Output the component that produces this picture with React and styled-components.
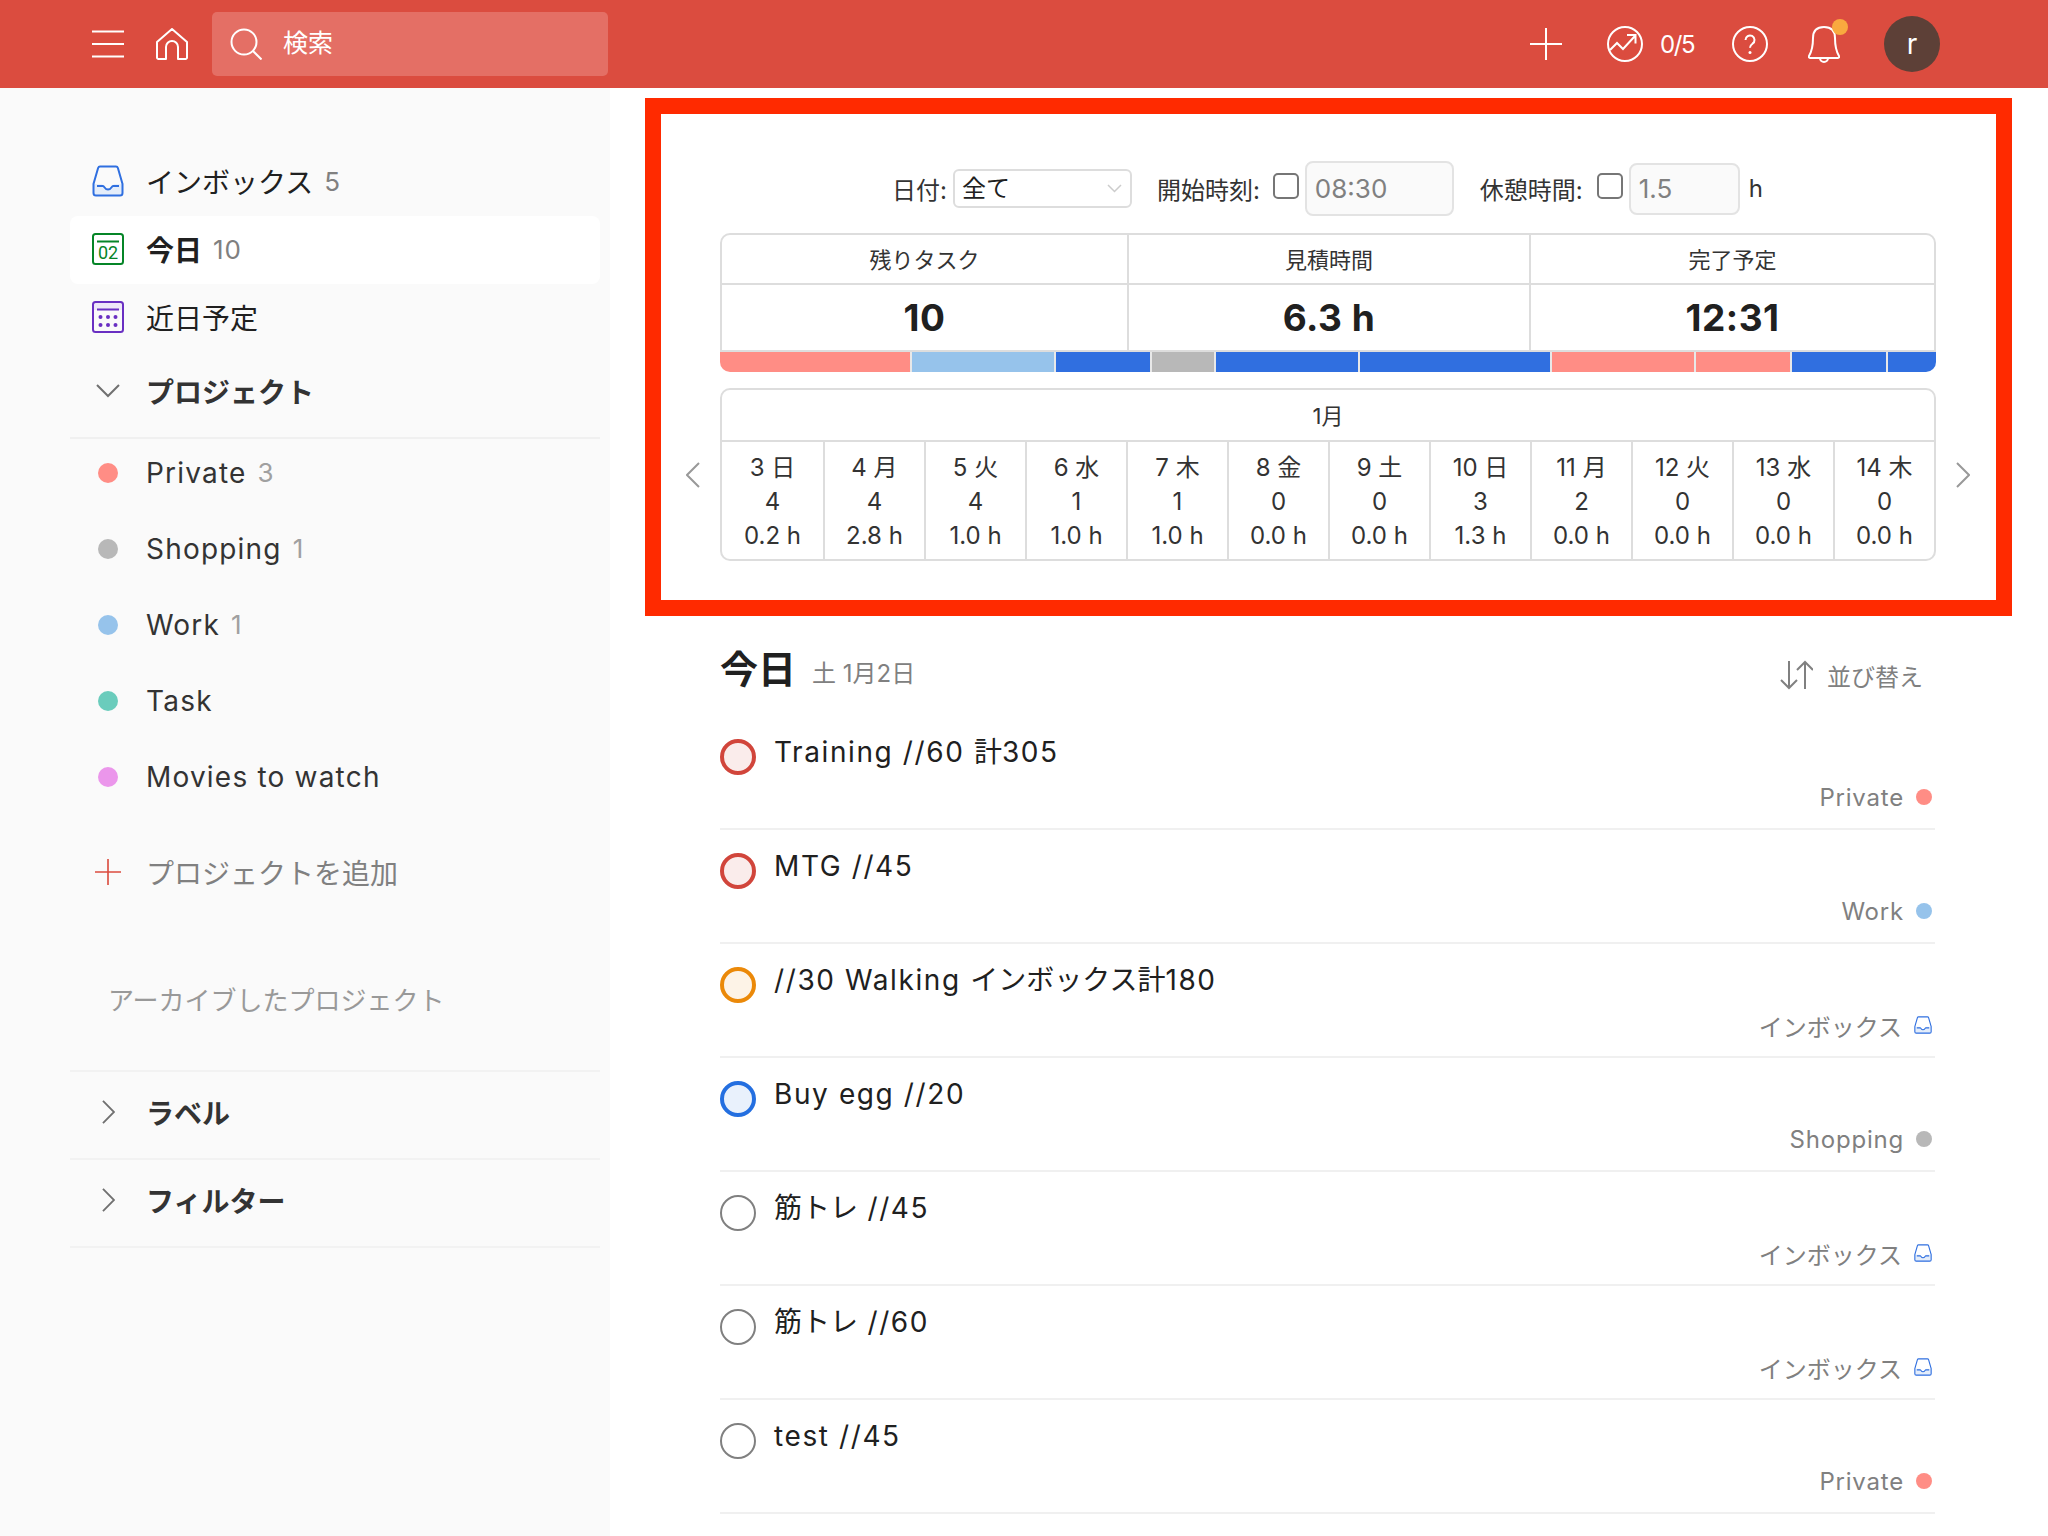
import React from "react";
import styled, { createGlobalStyle } from "styled-components";

const FONT = `Inter, "Noto Sans CJK JP", sans-serif`;

const Global = createGlobalStyle`
  html, body {
    margin: 0;
    padding: 0;
    height: 1536px;
    overflow: hidden;
    background: #fff;
    font-family: ${FONT};
    color: #202020;
  }
  * { box-sizing: border-box; }
`;

const Page = styled.div`
  width: 2048px;
  height: 1536px;
  display: flex;
  flex-direction: column;
  overflow: hidden;
`;

const TopBar = styled.header`
  height: 88px;
  flex: none;
  background: #db4c3f;
  display: flex;
  align-items: center;
  padding-left: 92px;
  color: #fff;
`;

const BarIcon = styled.svg`
  display: block;
  flex: none;
  margin-right: ${(p) => p.$mr || 0}px;
`;

const SearchBox = styled.div`
  width: 396px;
  height: 64px;
  border-radius: 5px;
  background: #e46f65;
  display: flex;
  align-items: center;
  padding-left: 18px;
  font-size: 25px;
  gap: 21px;
`;

const SearchText = styled.span`
  padding-bottom: 6px;
`;

const TopRight = styled.div`
  margin-left: auto;
  display: flex;
  align-items: center;
  padding-right: 108px;
`;

const Karma = styled.span`
  font-size: 24px;
  letter-spacing: -1.5px;
  margin-right: 38px;
`;

const BellWrap = styled.div`
  position: relative;
  margin-right: 44px;
`;

const BellDot = styled.span`
  position: absolute;
  top: -7px;
  right: -8px;
  width: 16px;
  height: 16px;
  border-radius: 50%;
  background: #f9a93f;
`;

const Avatar = styled.div`
  width: 56px;
  height: 56px;
  border-radius: 50%;
  background: #5d4037;
  display: flex;
  align-items: center;
  justify-content: center;
  font-size: 28px;
`;

const Body = styled.div`
  flex: 1;
  display: flex;
  min-height: 0;
`;

const Sidebar = styled.aside`
  width: 610px;
  flex: none;
  background: #fafafa;
  padding: 60px 10px 0 70px;
`;

const NavRow = styled.div`
  height: 68px;
  display: flex;
  align-items: center;
  padding: 0 0 2px 22px;
  border-radius: 8px;
  font-size: 28px;
  font-weight: ${(p) => (p.$active ? 700 : 400)};
  background: ${(p) => (p.$active ? "#fff" : "transparent")};
`;

const IconSlot = styled.span`
  width: 32px;
  flex: none;
  display: flex;
  align-items: center;
  justify-content: center;
  margin-right: 22px;
`;

const Count = styled.span`
  color: ${(p) => (p.$light ? "#a0a0a0" : "#808080")};
  font-weight: 400;
  font-size: 26px;
  letter-spacing: 1px;
  margin-left: 11px;
`;

const SectionHead = styled.div`
  height: 87px;
  display: flex;
  align-items: center;
  padding: 0 0 7px 22px;
  font-size: 28px;
  font-weight: 700;
  color: #333;
  border-bottom: 2px solid #f0f0f0;
  margin-bottom: -4px;
`;

const ProjectRow = styled.div`
  height: 76px;
  display: flex;
  align-items: center;
  padding: 0 0 1px 22px;
  font-size: 28px;
  letter-spacing: 1.2px;
  color: #333;
`;

const Dot = styled.span`
  width: ${(p) => p.$size}px;
  height: ${(p) => p.$size}px;
  border-radius: 50%;
  background: ${(p) => p.$color};
  flex: none;
`;

const AddRow = styled.div`
  height: 68px;
  margin-top: 23px;
  display: flex;
  align-items: center;
  padding-left: 22px;
  font-size: 28px;
  color: #808080;
`;

const Archived = styled.div`
  height: 40px;
  margin: 72px 0 52px 38px;
  display: flex;
  align-items: center;
  font-size: 26px;
  color: #999;
`;

const Fold = styled.div`
  height: 88px;
  display: flex;
  align-items: center;
  padding: 0 0 6px 22px;
  font-size: 28px;
  font-weight: 700;
  color: #333;
  border-top: 2px solid #f2f2f2;
  &:last-child {
    height: 90px;
    border-bottom: 2px solid #f2f2f2;
  }
`;

const Main = styled.main`
  flex: 1;
  padding: 10px 36px 0 35px;
`;

const Frame = styled.section`
  height: 518px;
  border: 16px solid #ff2a00;
  padding: 47px 60px 0 59px;
`;

const Controls = styled.div`
  display: flex;
  align-items: center;
  height: 55px;
  padding-left: 172px;
  font-size: 24px;
  color: #333;
  margin-bottom: 17px;
`;

const Label = styled.span`
  margin-right: ${(p) => p.$mr}px;
  white-space: nowrap;
`;

const SelectWrap = styled.div`
  position: relative;
  margin-right: 25px;
`;

const Select = styled.select`
  appearance: none;
  display: block;
  width: 179px;
  height: 39px;
  border: 2px solid #ddd;
  border-radius: 6px;
  background: #fff;
  font: 24px ${FONT};
  color: #202020;
  padding: 0 0 0 7px;
`;

const SelectChevron = styled.svg`
  position: absolute;
  right: 10px;
  top: 15px;
`;

const Check = styled.input`
  appearance: none;
  width: 26px;
  height: 26px;
  margin: 0 6px 6px 0;
  border: 2px solid #767676;
  border-radius: 5px;
  background: #fff;
  flex: none;
`;

const TimeInput = styled.input`
  width: ${(p) => p.$w}px;
  height: ${(p) => p.$h}px;
  margin-right: ${(p) => p.$mr}px;
  border: 2px solid #e3e3e3;
  border-radius: 8px;
  background: #fafafa;
  color: #808080;
  font: 26px ${FONT};
  padding: 0 0 0 8px;
  outline: none;
`;

const SummaryTable = styled.div`
  display: grid;
  grid-template-columns: 405px 402px 1fr;
  border: 2px solid #ddd;
  border-radius: 10px 10px 0 0;
  height: 119px;
`;

const SummaryCell = styled.div`
  display: flex;
  flex-direction: column;
  border-left: ${(p) => (p.$first ? "none" : "2px solid #ddd")};
`;

const SummaryHead = styled.div`
  height: 50px;
  display: flex;
  align-items: center;
  justify-content: center;
  padding-bottom: 2px;
  font-size: 22px;
  color: #333;
  border-bottom: 2px solid #ddd;
`;

const SummaryValue = styled.div`
  flex: 1;
  display: flex;
  align-items: center;
  justify-content: center;
  font-size: 37px;
  font-weight: 700;
  letter-spacing: 0.5px;
  color: #202020;
`;

const Bar = styled.div`
  display: flex;
  height: 20px;
  border-radius: 0 0 10px 10px;
  overflow: hidden;
  margin-bottom: 16px;
`;

const BarPart = styled.div`
  background: ${(p) => p.$color};
  min-width: 0;
  border-right: 2px solid #e8e8e8;
  &:last-child {
    border-right: none;
  }
`;

const MonthRow = styled.div`
  display: flex;
  align-items: center;
  margin: 0 -54px;
`;

const ArrowSlot = styled.div`
  width: 54px;
  flex: none;
  display: flex;
  justify-content: center;
`;

const MonthBox = styled.div`
  flex: 1;
  height: 173px;
  border: 2px solid #ddd;
  border-radius: 10px;
`;

const MonthTitle = styled.div`
  height: 52px;
  display: flex;
  align-items: center;
  justify-content: center;
  padding-bottom: 2px;
  font-size: 22px;
  color: #333;
  border-bottom: 2px solid #ddd;
`;

const DayGrid = styled.div`
  display: grid;
  grid-template-columns: repeat(12, 1fr);
  height: 119px;
`;

const DayCell = styled.div`
  display: flex;
  flex-direction: column;
  align-items: center;
  padding-top: 9px;
  font-size: 24px;
  line-height: 34px;
  color: #333;
  border-left: ${(p) => (p.$first ? "none" : "2px solid #ddd")};
`;

const TaskSection = styled.section`
  padding: 0 77px 0 75px;
`;

const TitleRow = styled.div`
  height: 100px;
  display: flex;
  align-items: center;
  padding: 0 12px 0 0;
`;

const Title = styled.h1`
  margin: 0 16px 0 0;
  font-size: 38px;
  font-weight: 700;
  color: #202020;
`;

const TitleDate = styled.span`
  font-size: 24px;
  color: #808080;
  margin-top: 10px;
`;

const Sort = styled.div`
  margin-left: auto;
  display: flex;
  align-items: center;
  gap: 14px;
  font-size: 24px;
  color: #808080;
  margin-top: 18px;
`;

const TaskRow = styled.div`
  height: 114px;
  padding-top: 16px;
  border-bottom: 2px solid #f0f0f0;
`;

const TaskTop = styled.div`
  display: flex;
  align-items: flex-start;
  gap: 18px;
  font-size: 28px;
  line-height: 40px;
  color: #202020;
`;

const TaskCircle = styled.span`
  width: 36px;
  height: 36px;
  margin-top: 7px;
  border-radius: 50%;
  flex: none;
  border: ${(p) => p.$bw}px solid ${(p) => p.$color};
  background: ${(p) => p.$fill};
`;

const TaskMeta = styled.div`
  height: 36px;
  margin-top: 4px;
  display: flex;
  align-items: center;
  justify-content: flex-end;
  gap: 12px;
  padding-right: 3px;
  font-size: 24px;
  letter-spacing: ${(p) => (p.$latin ? "0.8px" : "0")};
  color: #808080;
`;

// latin runs are wider in the reference than in Inter, kana and kanji are not
const LatinRun = styled.span`
  letter-spacing: 1.6px;
  white-space: pre;
`;

const Mixed = ({ text }) => (
  <span>
    {text.split(/([\x20-\x7e]+)/).map((part, i) =>
      i % 2 ? <LatinRun key={i}>{part}</LatinRun> : part
    )}
  </span>
);

const InboxIcon = ({ size = 32 }) => (
  <svg width={size} height={size} viewBox="0 0 32 32" fill="none">
    <path d="M2 19h8l3 4h6l3-4h8v9a3 3 0 0 1-3 3H5a3 3 0 0 1-3-3z" fill="#e4edfa" />
    <path
      d="M8 1.500h16c1 0 1.600.6 1.900 1.500L30.500 19v9a2.500 2.500 0 0 1-2.500 2.500H4A2.500 2.500 0 0 1 1.500 28v-9L6.100 3C6.400 2.100 7 1.500 8 1.500z"
      stroke="#2f6fe0"
      strokeWidth="2"
    />
    <path d="M5 21h6c1.500 0 1.500 3.500 5 3.500S19.500 21 21 21h6" stroke="#2f6fe0" strokeWidth="2" />
  </svg>
);

const TodayIcon = () => (
  <svg width="32" height="32" viewBox="0 0 32 32" fill="none">
    <rect x="1" y="1" width="30" height="30" rx="2.500" stroke="#058527" strokeWidth="2" />
    <path d="M5 8.500h22" stroke="#058527" strokeWidth="2" />
    <text x="16" y="26" textAnchor="middle" fontSize="18" fontWeight="400" fill="#058527" fontFamily="Roboto, sans-serif">02</text>
  </svg>
);

const UpcomingIcon = () => (
  <svg width="32" height="32" viewBox="0 0 32 32" fill="none">
    <path d="M2 9h28V4a3 3 0 0 0-3-3H5a3 3 0 0 0-3 3z" fill="#eee7f8" />
    <rect x="1" y="1" width="30" height="30" rx="2.500" stroke="#692fc2" strokeWidth="2" />
    <path d="M5 8.500h22" stroke="#692fc2" strokeWidth="2" />
    {[8.5, 16, 23.5].map((x) =>
      [16, 24].map((y) => <circle key={`${x}-${y}`} cx={x} cy={y} r="2" fill="#692fc2" />)
    )}
  </svg>
);

const Plus = ({ size, color = "#fff" }) => (
  <svg width={size} height={size} viewBox="0 0 32 32" style={{ display: "block" }}>
    <path d="M16 0v32M0 16h32" stroke={color} strokeWidth="2" />
  </svg>
);

const Chevron = ({ dir, color = "#808080", w = 14, h = 26, sw = 2 }) => {
  const d = dir === "left" ? "M13 1 1 13l12 12" : "M1 1l12 12L1 25";
  return (
    <svg width={w} height={h} viewBox="0 0 14 26" fill="none" style={{ display: "block" }}>
      <path d={d} stroke={color} strokeWidth={sw} />
    </svg>
  );
};

const ChevronDown = () => (
  <svg width="24" height="14" viewBox="0 0 24 14" fill="none" style={{ display: "block" }}>
    <path d="M1 1l11 11L23 1" stroke="#707070" strokeWidth="2" />
  </svg>
);

const projects = [
  { name: "Private", color: "#ff8d85", count: 3 },
  { name: "Shopping", color: "#b8b8b8", count: 1 },
  { name: "Work", color: "#96c3eb", count: 1 },
  { name: "Task", color: "#6accbc" },
  { name: "Movies to watch", color: "#eb96eb" },
];

const barParts = [
  [60, "#ff8d85"],
  [45, "#96c3eb"],
  [30, "#306fe0"],
  [20, "#b8b8b8"],
  [45, "#306fe0"],
  [60, "#306fe0"],
  [45, "#ff8d85"],
  [30, "#ff8d85"],
  [30, "#306fe0"],
  [15, "#306fe0"],
];
const barTotal = barParts.reduce((sum, [min]) => sum + min, 0);

const days = [
  ["3 日", "4", "0.2 h"],
  ["4 月", "4", "2.8 h"],
  ["5 火", "4", "1.0 h"],
  ["6 水", "1", "1.0 h"],
  ["7 木", "1", "1.0 h"],
  ["8 金", "0", "0.0 h"],
  ["9 土", "0", "0.0 h"],
  ["10 日", "3", "1.3 h"],
  ["11 月", "2", "0.0 h"],
  ["12 火", "0", "0.0 h"],
  ["13 水", "0", "0.0 h"],
  ["14 木", "0", "0.0 h"],
];

const P1 = { color: "#d1453b", fill: "#faeceb", bw: 4 };
const P2 = { color: "#eb8909", fill: "#fdf3e7", bw: 4 };
const P3 = { color: "#246fe0", fill: "#e9f1fc", bw: 4 };
const P4 = { color: "#808080", fill: "#fff", bw: 2 };

const tasks = [
  { text: "Training //60 計305", p: P1, project: "Private", dot: "#ff8d85" },
  { text: "MTG //45", p: P1, project: "Work", dot: "#96c3eb" },
  { text: "//30 Walking インボックス計180", p: P2, project: "インボックス" },
  { text: "Buy egg //20", p: P3, project: "Shopping", dot: "#b8b8b8" },
  { text: "筋トレ //45", p: P4, project: "インボックス" },
  { text: "筋トレ //60", p: P4, project: "インボックス" },
  { text: "test //45", p: P4, project: "Private", dot: "#ff8d85" },
];

function Header() {
  return (
    <TopBar>
      <BarIcon width="32" height="28" viewBox="0 0 32 28" $mr={32}>
        <path d="M0 1.500h32M0 14h32M0 26.500h32" stroke="#fff" strokeWidth="2" />
      </BarIcon>
      <BarIcon width="32" height="32" viewBox="0 0 32 32" fill="none" $mr={24}>
        <path
          d="M1 14 16 1l15 13v15.500a1.500 1.500 0 0 1-1.500 1.500H22V19a6 6 0 0 0-12 0v12H2.500A1.500 1.500 0 0 1 1 29.500z"
          stroke="#fff"
          strokeWidth="2"
          strokeLinejoin="round"
        />
      </BarIcon>
      <SearchBox>
        <BarIcon width="32" height="32" viewBox="0 0 32 32" fill="none">
          <circle cx="14" cy="14" r="12.500" stroke="#fff" strokeWidth="2" />
          <path d="m23 23 8.500 8.500" stroke="#fff" strokeWidth="2" />
        </BarIcon>
        <SearchText>検索</SearchText>
      </SearchBox>
      <TopRight>
        <BarIcon as="span" $mr={45}>
          <Plus size={32} />
        </BarIcon>
        <BarIcon width="36" height="36" viewBox="0 0 36 36" fill="none" $mr={17}>
          <circle cx="18" cy="18" r="17" stroke="#fff" strokeWidth="2" />
          <path d="m3 24 7-7 6 6 12-13M20 9h8.500v8.500" stroke="#fff" strokeWidth="2" />
        </BarIcon>
        <Karma>0/5</Karma>
        <BarIcon width="36" height="36" viewBox="0 0 36 36" fill="none" $mr={40}>
          <circle cx="18" cy="18" r="17" stroke="#fff" strokeWidth="2" />
          <path d="M13.500 14a4.500 4.500 0 1 1 7 3.700c-1.700 1.200-2.500 2-2.500 4" stroke="#fff" strokeWidth="2" />
          <circle cx="18" cy="26.500" r="1.500" fill="#fff" />
        </BarIcon>
        <BellWrap>
          <BarIcon width="32" height="37" viewBox="0 0 32 37" fill="none">
            <path
              d="M5 12C5 5 9 1 16 1s11 4 11 11c0 9 1 13 4 18 .6 1 0 2-1 2H2c-1 0-1.600-1-1-2 3-5 4-9 4-18z"
              stroke="#fff"
              strokeWidth="2"
            />
            <path d="M12 32a4 4 0 0 0 8 0" stroke="#fff" strokeWidth="2" />
          </BarIcon>
          <BellDot />
        </BellWrap>
        <Avatar>r</Avatar>
      </TopRight>
    </TopBar>
  );
}

function Side() {
  return (
    <Sidebar>
      <NavRow>
        <IconSlot><InboxIcon /></IconSlot>
        インボックス<Count>5</Count>
      </NavRow>
      <NavRow $active>
        <IconSlot><TodayIcon /></IconSlot>
        今日<Count>10</Count>
      </NavRow>
      <NavRow>
        <IconSlot><UpcomingIcon /></IconSlot>
        近日予定
      </NavRow>
      <SectionHead>
        <IconSlot><ChevronDown /></IconSlot>
        プロジェクト
      </SectionHead>
      {projects.map((p) => (
        <ProjectRow key={p.name}>
          <IconSlot><Dot $size={20} $color={p.color} /></IconSlot>
          {p.name}
          {p.count && <Count $light>{p.count}</Count>}
        </ProjectRow>
      ))}
      <AddRow>
        <IconSlot><Plus size={26} color="#db4c3f" /></IconSlot>
        プロジェクトを追加
      </AddRow>
      <Archived>アーカイブしたプロジェクト</Archived>
      <Fold>
        <IconSlot><Chevron dir="right" h={24} w={13} color="#707070" /></IconSlot>
        ラベル
      </Fold>
      <Fold>
        <IconSlot><Chevron dir="right" h={24} w={13} color="#707070" /></IconSlot>
        フィルター
      </Fold>
    </Sidebar>
  );
}

function Planner() {
  return (
    <Frame>
      <Controls>
        <Label $mr={6}>日付:</Label>
        <SelectWrap>
          <Select defaultValue="all">
            <option value="all">全て</option>
          </Select>
          <SelectChevron width="15" height="9" viewBox="0 0 15 9" fill="none">
            <path d="m1 1 6.500 6.500L14 1" stroke="#ccc" strokeWidth="1.500" />
          </SelectChevron>
        </SelectWrap>
        <Label $mr={13}>開始時刻:</Label>
        <Check type="checkbox" />
        <TimeInput $w={149} $h={55} $mr={26} defaultValue="08:30" />
        <Label $mr={14}>休憩時間:</Label>
        <Check type="checkbox" />
        <TimeInput $w={111} $h={52} $mr={9} defaultValue="1.5" />
        <span>h</span>
      </Controls>
      <SummaryTable>
        <SummaryCell $first>
          <SummaryHead>残りタスク</SummaryHead>
          <SummaryValue>10</SummaryValue>
        </SummaryCell>
        <SummaryCell>
          <SummaryHead>見積時間</SummaryHead>
          <SummaryValue>6.3 h</SummaryValue>
        </SummaryCell>
        <SummaryCell>
          <SummaryHead>完了予定</SummaryHead>
          <SummaryValue>12:31</SummaryValue>
        </SummaryCell>
      </SummaryTable>
      <Bar>
        {barParts.map(([min, color], i) => (
          <BarPart key={i} $color={color} style={{ flex: `0 0 ${(min / barTotal) * 100}%` }} />
        ))}
      </Bar>
      <MonthRow>
        <ArrowSlot><Chevron dir="left" color="#999" /></ArrowSlot>
        <MonthBox>
          <MonthTitle>1月</MonthTitle>
          <DayGrid>
            {days.map((d, i) => (
              <DayCell key={d[0]} $first={i === 0}>
                <span>{d[0]}</span>
                <span>{d[1]}</span>
                <span>{d[2]}</span>
              </DayCell>
            ))}
          </DayGrid>
        </MonthBox>
        <ArrowSlot><Chevron dir="right" color="#999" /></ArrowSlot>
      </MonthRow>
    </Frame>
  );
}

function TaskList() {
  return (
    <TaskSection>
      <TitleRow>
        <Title>今日</Title>
        <TitleDate>土 1月2日</TitleDate>
        <Sort>
          <svg width="33" height="30" viewBox="0 0 33 30" fill="none">
            <path d="M9 1v27M1 20l8 8 8-8M25 29V2M17 10l8-8 8 8" stroke="#808080" strokeWidth="2" />
          </svg>
          並び替え
        </Sort>
      </TitleRow>
      {tasks.map((t, i) => (
        <TaskRow key={i}>
          <TaskTop>
            <TaskCircle $color={t.p.color} $fill={t.p.fill} $bw={t.p.bw} />
            <Mixed text={t.text} />
          </TaskTop>
          <TaskMeta $latin={Boolean(t.dot)}>
            {t.project}
            {t.dot ? <Dot $size={16} $color={t.dot} /> : <InboxIcon size={18} />}
          </TaskMeta>
        </TaskRow>
      ))}
    </TaskSection>
  );
}

export default function App() {
  return (
    <Page>
      <Global />
      <Header />
      <Body>
        <Side />
        <Main>
          <Planner />
          <TaskList />
        </Main>
      </Body>
    </Page>
  );
}
